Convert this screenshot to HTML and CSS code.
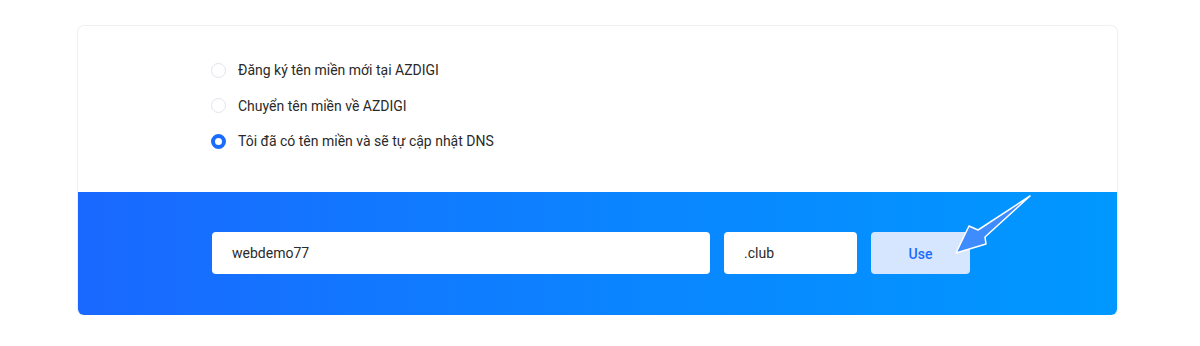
FILE: index.html
```html
<!DOCTYPE html>
<html lang="vi">
<head>
    <meta charset="UTF-8">
    <meta name="viewport" content="width=device-width, initial-scale=1.0">
    <title>Domain Options</title>
    <link rel="stylesheet" href="styles.css">
</head>
<body>
    <div class="card">
        <div class="options">
            <label class="option">
                <span class="radio"></span>
                <span>Đăng ký tên miền mới tại AZDIGI</span>
            </label>
            <label class="option">
                <span class="radio"></span>
                <span>Chuyển tên miền về AZDIGI</span>
            </label>
            <label class="option">
                <span class="radio checked"></span>
                <span>Tôi đã có tên miền và sẽ tự cập nhật DNS</span>
            </label>
        </div>

        <div class="domain-bar">
            <div class="field field-name">webdemo77</div>
            <div class="field field-tld">.club</div>
            <button class="use-button">Use</button>
        </div>

        <!-- pointer arrow drawn over the bar -->
        <svg class="pointer" width="90" height="70" viewBox="0 0 90 70">
            <polygon points="80,6 28,40 19,36 6,63 36,54 35,47" fill="#3f8cff" stroke="#ffffff" stroke-width="1.5" stroke-linejoin="round"/>
        </svg>
    </div>
</body>
</html>
```

FILE: styles.css
```css
* {
    margin: 0;
    padding: 0;
    box-sizing: border-box;
}

body {
    font-family: Roboto, "Noto Sans", sans-serif;
    background: #ffffff;
    color: #2d2d2d;
    padding: 26px 0 0 78px;
}

.card {
    position: relative;
    width: 1039px;
    border-radius: 6px;
    background: #ffffff;
    box-shadow: 0 0 0 1px #f0f0f0, 0 1px 4px rgba(0, 0, 0, 0.04);
    overflow: hidden;
}

.options {
    height: 166px;
    padding: 36px 0 0 133px;
    display: flex;
    flex-direction: column;
    gap: 19.5px;
}

.option {
    display: flex;
    align-items: center;
    gap: 12px;
    font-size: 14px;
    line-height: 16px;
    color: #2a2a2a;
}

.radio {
    width: 15px;
    height: 15px;
    border-radius: 50%;
    border: 1px solid #e1e4ee;
    background: #ffffff;
}

.radio.checked {
    border: 4px solid #1a6cff;
}

.domain-bar {
    height: 123px;
    padding: 40px 0 0 134px;
    display: flex;
    gap: 14px;
    background: linear-gradient(90deg, #1a68ff 0%, #0a86ff 55%, #0098ff 100%);
}

.field {
    height: 42px;
    background: #ffffff;
    border-radius: 4px;
    padding: 0 20px;
    display: flex;
    align-items: center;
    font-size: 14px;
    color: #2a2a2a;
}

.field-name {
    width: 498px;
}

.field-tld {
    width: 133px;
}

.use-button {
    width: 99px;
    height: 42px;
    border: none;
    border-radius: 4px;
    background: #d6e6ff;
    color: #1a6cff;
    font-family: inherit;
    font-size: 14px;
    font-weight: 500;
    padding-top: 2px;
}

.pointer {
    position: absolute;
    left: 872px;
    top: 164px;
}
```
